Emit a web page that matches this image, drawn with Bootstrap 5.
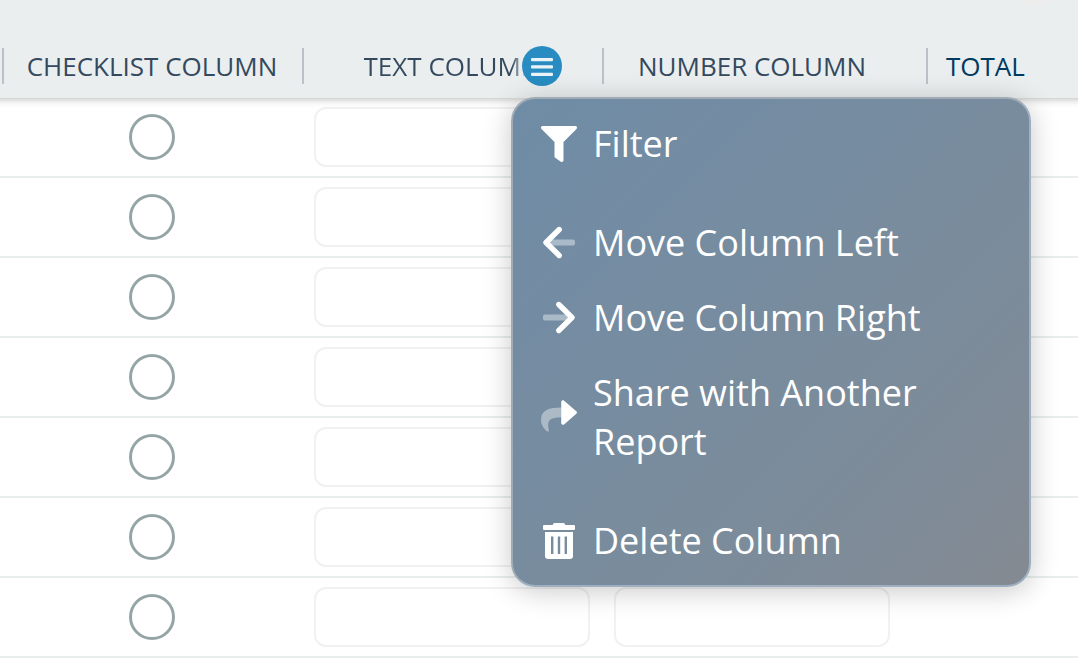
<!DOCTYPE html>
<html lang="en">
<head>
<meta charset="utf-8">
<meta name="viewport" content="width=device-width, initial-scale=1">
<title>Report columns</title>
<link rel="stylesheet" href="https://cdn.jsdelivr.net/npm/bootstrap@5.3.0/dist/css/bootstrap.min.css">
<style>
  body { font-family: "Open Sans", sans-serif; background: #fff; overflow-x: hidden; }
  .report { table-layout: fixed; border-collapse: separate; border-spacing: 0; }
  .report thead { position: relative; z-index: 2; background: #eaeeef; box-shadow: 0 -7px 8px 8px rgba(0, 0, 0, .28); }
  .report th { padding: 48px 0 14px; font-weight: 400; }
  .report td { height: 80px; padding: 0 12px; border-bottom: 2px solid #e8eeee; vertical-align: middle; }
  .report th:first-child, .report td:first-child { padding-left: 2px; }
  .report td:first-child { padding-right: 0; }
  .report th:nth-child(3) { padding-right: 24px; }
  .report td:nth-child(3) { padding-right: 36px; }
  .col-std { width: 302px; }
  .col-text { width: 300px; }
  .col-num { width: 324px; }
  .heading { height: 36px; padding-right: 2px; border-left: 2px solid #bcc0c8; font-size: 26px; line-height: 36px; color: #34495e; text-align: center; white-space: nowrap; }
  .heading-total { padding-left: 18px; color: #003a60; text-align: left; }
  .report th:last-child { background: radial-gradient(circle 20px at 108px -14px, #efedec 18px, transparent 20px); }
  .fade-name { background: linear-gradient(90deg, #34495e 84%, rgba(52, 73, 94, .4) 89%); -webkit-background-clip: text; background-clip: text; color: transparent; }
  .report .form-check-input { width: 46px; height: 46px; border: 3px solid #95a5a6; background-color: #fff; }
  .report .form-control { height: 60px; border: 2px solid #f1f1f1; border-radius: 12px; }
  .column-tools { position: absolute; top: 46px; right: 40px; }
  .menu-toggle { width: 40px; height: 40px; border: 0; border-radius: 50%; background: #288cc2; }
  .column-menu { top: 51px; left: -11px; width: 520px; padding: 7px 0; border: 2px solid #9dafc0; border-top-color: #a1abb5; border-left-color: #a1abb5; border-radius: 24px; background: linear-gradient(135deg, #6f8ca6, #758ca2 30%, #7a8c9c 60%, #808b97 85%, #848a91); box-shadow: 0 4px 28px rgba(0, 0, 0, .22); }
  .column-menu .dropdown-item { gap: 16px; padding: 13px 28px; font-size: 36px; line-height: 49px; color: #fff; white-space: normal; }
  .column-menu .dropdown-item:hover { background: rgba(255, 255, 255, .12); }
  .menu-gap { height: 24px; }
</style>
</head>
<body>
<table class="report w-100">
  <colgroup><col class="col-std"><col class="col-text"><col class="col-num"><col></colgroup>
  <thead>
    <tr>
      <th scope="col"><div class="heading">CHECKLIST COLUMN</div></th>
      <th scope="col" class="position-relative">
        <div class="heading"><span class="fade-name">TEXT COLUMN</span></div>
        <div class="column-tools dropdown">
          <button type="button" class="menu-toggle d-flex align-items-center justify-content-center p-0" data-bs-toggle="dropdown" aria-expanded="true" aria-label="Column menu">
            <svg width="22" height="22" viewBox="0 0 22 22" fill="#eaf3f7" aria-hidden="true"><rect y="3" width="22" height="3.300" rx="1"/><rect y="10.300" width="22" height="3.300" rx="1"/><rect y="17.700" width="22" height="3.300" rx="1"/></svg>
          </button>
          <ul class="dropdown-menu column-menu show">
            <li><a href="#" class="dropdown-item d-flex align-items-center">
              <svg class="flex-shrink-0" width="36" height="36" viewBox="0 0 512 512" fill="#fff" aria-hidden="true"><path d="M487.976 0H24.028C2.71 0-8.047 25.866 7.058 40.971L192 225.941V432c0 7.831 3.821 15.17 10.237 19.662l80 55.98C298.02 518.69 320 507.493 320 487.98V225.941l184.947-184.97C520.021 25.896 509.338 0 487.976 0z"/></svg>
              <span>Filter</span></a></li>
            <li class="menu-gap"></li>
            <li><a href="#" class="dropdown-item d-flex align-items-center">
              <svg class="flex-shrink-0" width="36" height="36" viewBox="0 0 36 36" aria-hidden="true"><path d="M10 14.500h22a2 2 0 0 1 2 2v2a2 2 0 0 1-2 2H10l-3-3z" fill="#fff" opacity=".4"/><path d="M18.200 4.500 5 17.500l13.200 13" fill="none" stroke="#fff" stroke-width="5.400" stroke-linecap="round" stroke-linejoin="round"/></svg>
              <span>Move Column Left</span></a></li>
            <li><a href="#" class="dropdown-item d-flex align-items-center">
              <svg class="flex-shrink-0" width="36" height="36" viewBox="0 0 36 36" aria-hidden="true"><path d="M26 14.500H4a2 2 0 0 0-2 2v2a2 2 0 0 0 2 2h22l3-3z" fill="#fff" opacity=".4"/><path d="m17.800 4.500 13.200 13-13.200 13" fill="none" stroke="#fff" stroke-width="5.400" stroke-linecap="round" stroke-linejoin="round"/></svg>
              <span>Move Column Right</span></a></li>
            <li><a href="#" class="dropdown-item d-flex align-items-center">
              <svg class="flex-shrink-0" width="36" height="36" viewBox="0 0 36 36" fill="#fff" aria-hidden="true"><path d="M20.200 8.500C8 8.500 0 11 0 21c0 4.500 2.500 8.500 6 11.300 1 .8 2.200.1 1.800-1.200C5.500 21 9 18.500 20.200 18.300z" opacity=".4"/><path d="M20.200 3c0-1.600 1.900-2.200 2.900-1.200l12.200 10.500a1.600 1.600 0 0 1 0 2.400L23.100 25.400c-1.100.9-2.900.3-2.900-1.300z"/></svg>
              <span>Share with Another Report</span></a></li>
            <li class="menu-gap"></li>
            <li><a href="#" class="dropdown-item d-flex align-items-center">
              <svg class="flex-shrink-0" width="36" height="36" viewBox="0 0 36 36" fill="#fff" aria-hidden="true"><path d="M12 1.200Q12.500 0 14 0h8q1.500 0 2 1.200L24.300 2H33q1 0 1 1v3q0 1-1 1H3Q2 7 2 6V3q0-1 1-1h8.700zM4 9h28v24q0 3-3 3H7q-3 0-3-3zm6 4.500v17.500h2.400V13.500zm6.800 0v17.500h2.400V13.500zm6.800 0v17.500H26V13.500z" fill-rule="evenodd"/></svg>
              <span>Delete Column</span></a></li>
          </ul>
        </div>
      </th>
      <th scope="col"><div class="heading">NUMBER COLUMN</div></th>
      <th scope="col"><div class="heading heading-total">TOTAL</div></th>
    </tr>
  </thead>
  <tbody>
    <tr><td><input class="form-check-input d-block mx-auto my-0" type="radio" name="r1" aria-label="Row 1 done"></td><td><input class="form-control" type="text" aria-label="Row 1 text"></td><td><input class="form-control" type="text" inputmode="numeric" aria-label="Row 1 number"></td><td></td></tr>
    <tr><td><input class="form-check-input d-block mx-auto my-0" type="radio" name="r2" aria-label="Row 2 done"></td><td><input class="form-control" type="text" aria-label="Row 2 text"></td><td><input class="form-control" type="text" inputmode="numeric" aria-label="Row 2 number"></td><td></td></tr>
    <tr><td><input class="form-check-input d-block mx-auto my-0" type="radio" name="r3" aria-label="Row 3 done"></td><td><input class="form-control" type="text" aria-label="Row 3 text"></td><td><input class="form-control" type="text" inputmode="numeric" aria-label="Row 3 number"></td><td></td></tr>
    <tr><td><input class="form-check-input d-block mx-auto my-0" type="radio" name="r4" aria-label="Row 4 done"></td><td><input class="form-control" type="text" aria-label="Row 4 text"></td><td><input class="form-control" type="text" inputmode="numeric" aria-label="Row 4 number"></td><td></td></tr>
    <tr><td><input class="form-check-input d-block mx-auto my-0" type="radio" name="r5" aria-label="Row 5 done"></td><td><input class="form-control" type="text" aria-label="Row 5 text"></td><td><input class="form-control" type="text" inputmode="numeric" aria-label="Row 5 number"></td><td></td></tr>
    <tr><td><input class="form-check-input d-block mx-auto my-0" type="radio" name="r6" aria-label="Row 6 done"></td><td><input class="form-control" type="text" aria-label="Row 6 text"></td><td><input class="form-control" type="text" inputmode="numeric" aria-label="Row 6 number"></td><td></td></tr>
    <tr><td><input class="form-check-input d-block mx-auto my-0" type="radio" name="r7" aria-label="Row 7 done"></td><td><input class="form-control" type="text" aria-label="Row 7 text"></td><td><input class="form-control" type="text" inputmode="numeric" aria-label="Row 7 number"></td><td></td></tr>
  </tbody>
</table>
<script src="https://cdn.jsdelivr.net/npm/bootstrap@5.3.0/dist/js/bootstrap.bundle.min.js"></script>
</body>
</html>
